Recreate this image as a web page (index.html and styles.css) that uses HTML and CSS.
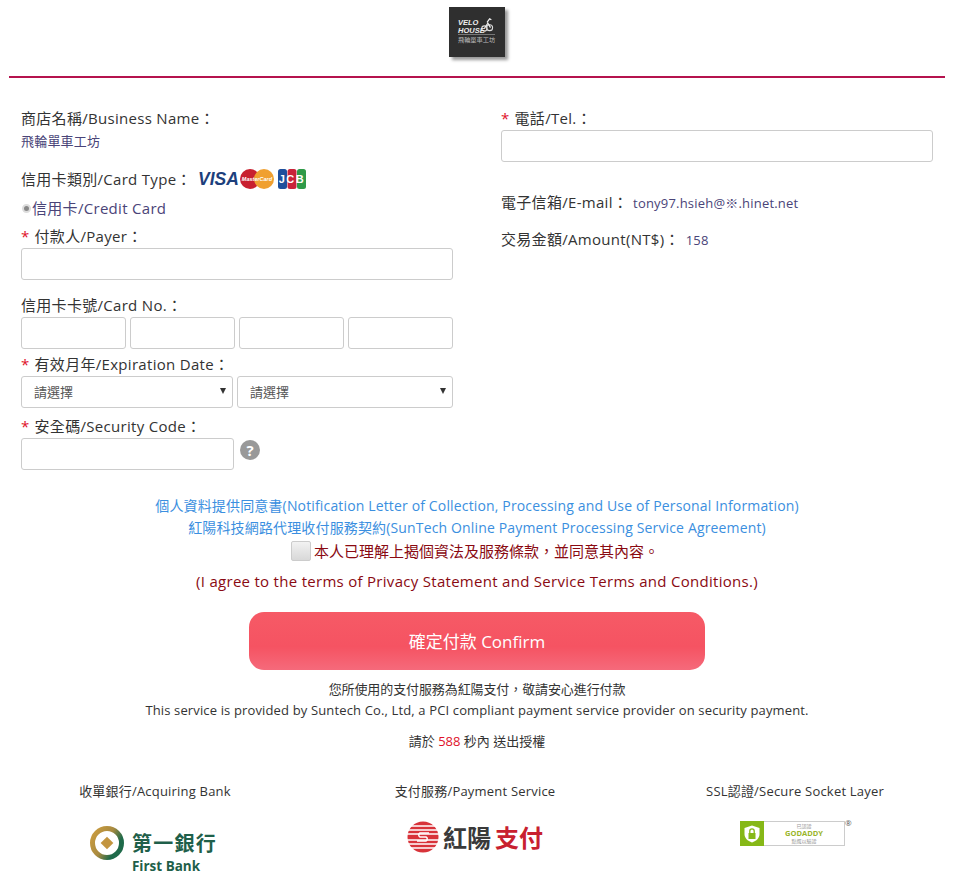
FILE: index.html
```html
<!DOCTYPE html>
<html lang="zh-Hant">
<head>
<meta charset="utf-8">
<title>飛輪單車工坊</title>
<link rel="stylesheet" href="styles.css">
</head>
<body>
<div class="page">
  <header class="top">
    <div class="logo">
      <svg class="logo-bike" viewBox="0 0 16 18" width="14" height="16"><circle cx="11" cy="12" r="3.4" fill="none" stroke="#ddd" stroke-width="1.2"/><circle cx="5" cy="13" r="3" fill="none" stroke="#ddd" stroke-width="1.2"/><path d="M5 13 9 7l3 5M8 6l3-4 2 1" fill="none" stroke="#eee" stroke-width="1.4"/></svg>
      <span class="logo-en">VELO<br>HOUSE</span>
      <span class="logo-zh">飛輪單車工坊</span>
    </div>
  </header>
  <main class="columns">
    <section class="col">
      <div class="label first">商店名稱/Business Name：</div>
      <div class="value store">飛輪單車工坊</div>
      <div class="label card-type">信用卡類別/Card Type：
        <svg class="cards" width="112" height="24" viewBox="0 0 112 24">
          <text x="1" y="18" class="visa">VISA</text>
          <circle cx="53" cy="12" r="10" fill="#c8202f"/>
          <circle cx="67" cy="12" r="10" fill="#f0a030"/>
          <text x="60" y="14" class="mc">MasterCard</text>
          <rect x="81" y="2" width="9" height="20" rx="2.5" fill="#1f4f9c"/>
          <rect x="90.5" y="2" width="9" height="20" rx="2.5" fill="#c9243a"/>
          <rect x="100" y="2" width="9" height="20" rx="2.5" fill="#2f9a48"/>
          <text x="95" y="16" class="jcb">JCB</text>
        </svg>
      </div>
      <div class="radio-row"><span class="radio"></span>信用卡/Credit Card</div>
      <div class="label payer"><span class="req">*</span>付款人/Payer：</div>
      <input class="field" type="text">
      <div class="label cardno">信用卡卡號/Card No.：</div>
      <div class="quad">
        <input class="field" type="text"><input class="field" type="text"><input class="field" type="text"><input class="field" type="text">
      </div>
      <div class="label expiry"><span class="req">*</span>有效月年/Expiration Date：</div>
      <div class="selects">
        <div class="select-wrap"><select class="field sel"><option>請選擇</option></select></div>
        <div class="select-wrap"><select class="field sel"><option>請選擇</option></select></div>
      </div>
      <div class="label security"><span class="req">*</span>安全碼/Security Code：</div>
      <div class="sec-row">
        <input class="field sec" type="text"><span class="help">?</span>
      </div>
    </section>
    <section class="col">
      <div class="label first"><span class="req">*</span>電話/Tel.：</div>
      <input class="field" type="text">
      <div class="label email">電子信箱/E-mail：<span class="value inline">tony97.hsieh@※.hinet.net</span></div>
      <div class="label amount">交易金額/Amount(NT$)：<span class="value inline wide">158</span></div>
    </section>
  </main>
  <section class="agree">
    <a class="link" href="#">個人資料提供同意書(Notification Letter of Collection, Processing and Use of Personal Information)</a>
    <a class="link" href="#">紅陽科技網路代理收付服務契約(SunTech Online Payment Processing Service Agreement)</a>
    <label class="check-row"><input class="check" type="checkbox">本人已理解上揭個資法及服務條款，並同意其內容。</label>
    <p class="agree-en">(I agree to the terms of Privacy Statement and Service Terms and Conditions.)</p>
    <button class="confirm" type="button">確定付款 Confirm</button>
    <p class="note n1">您所使用的支付服務為紅陽支付，敬請安心進行付款</p>
    <p class="note n2">This service is provided by Suntech Co., Ltd, a PCI compliant payment service provider on security payment.</p>
    <p class="note n3">請於 <span class="count">588</span> 秒內 送出授權</p>
  </section>
  <footer class="partners">
    <div class="partner">
      <div class="partner-title">收單銀行/Acquiring Bank</div>
      <div class="fb">
        <svg width="38" height="38" viewBox="0 0 38 38"><defs><linearGradient id="ring" x1="0" x2="1" y1="0.2" y2="0.8"><stop offset="0" stop-color="#c79a3f"/><stop offset=".45" stop-color="#a88a40"/><stop offset=".8" stop-color="#1f6a4a"/></linearGradient></defs><circle cx="19" cy="19" r="14.500" fill="#fff" stroke="url(#ring)" stroke-width="5"/><rect x="14.500" y="14.500" width="9" height="9" transform="rotate(45 19 19)" fill="#c3953f"/></svg>
        <div class="fb-text"><span class="fb-zh">第一銀行</span><span class="fb-en">First Bank</span></div>
      </div>
    </div>
    <div class="partner">
      <div class="partner-title">支付服務/Payment Service</div>
      <div class="st">
        <svg width="32" height="32" viewBox="0 0 32 32"><circle cx="16" cy="16" r="15.500" fill="#d8333a"/><path d="M0 5h32M0 9h32M0 13h32M0 19h32M0 23h32M0 27h32" stroke="#fff" stroke-width="1.300"/><path d="M22 12h-9a2.200 2.200 0 0 0 0 4h6a2.200 2.200 0 0 1 0 4h-9" fill="none" stroke="#fff" stroke-width="1.500"/></svg>
        <span class="st-dark">紅陽</span><span class="st-red">支付</span>
      </div>
    </div>
    <div class="partner">
      <div class="partner-title">SSL認證/Secure Socket Layer</div>
      <div class="gd">
        <div class="gd-badge">
          <div class="gd-icon"><svg width="16" height="18" viewBox="0 0 16 18"><path d="M8 .5 15.500 3v6c0 4-3 7-7.500 8.500C3.500 16 .5 13 .5 9V3z" fill="#fff"/><rect x="4.500" y="8" width="7" height="6" fill="#86b817"/><path d="M5.800 8V6a2.200 2.200 0 0 1 4.400 0v2" fill="none" stroke="#86b817" stroke-width="1.300"/></svg></div>
          <div class="gd-text"><span class="gd-s">已認證</span><span class="gd-m">GODADDY</span><span class="gd-s">點選以驗證</span></div>
        </div>
        <span class="gd-r">®</span>
      </div>
    </div>
  </footer>
</div>
</body>
</html>
```
FILE: styles.css
```css
* { box-sizing: border-box; }
html, body { margin: 0; padding: 0; background: #fff; }
body {
  font-family: "Open Sans", "Noto Sans CJK TC", sans-serif;
  color: #333;
  overflow: hidden;
}
.page { width: 936px; margin-left: 9px; }
.top {
  height: 78px;
  border-bottom: 2px solid #b5134e;
  padding-top: 7px;
  display: flex;
  justify-content: center;
}
.logo {
  width: 56px; height: 50px;
  background: #2f2f2f;
  box-shadow: 3px 3px 3px #999;
  color: #ddd;
  position: relative;
}
.logo-en {
  position: absolute; left: 9px; top: 12px;
  font: italic 900 7.500px/7.500px "Liberation Sans", sans-serif;
  color: #eee;
}
.logo-bike { position: absolute; left: 31px; top: 10px; }
.logo-zh {
  position: absolute; left: 9px; top: 27px;
  width: 37px;
  border-top: 1px solid #777;
  padding-top: 1px;
  font: 6.200px/8px "Noto Sans CJK TC", sans-serif;
  white-space: nowrap;
  color: #bbb;
}
.columns {
  display: grid;
  grid-template-columns: 432px 432px;
  column-gap: 48px;
  padding: 0 12px;
}
.col { display: block; min-width: 0; }
.label { font-size: 15px; line-height: 20px; color: #333; white-space: nowrap; letter-spacing: .3px; }
.first { margin-top: 30px; }
.req { color: #e0122a; margin-right: 5px; }
.value { color: #4a4478; font-size: 13px; line-height: 20px; letter-spacing: .2px; }
.inline { margin-left: 5px; }
.wide { margin-left: 6px; }
.store { margin-top: 3px; }
.card-type { margin-top: 18px; display: flex; align-items: center; height: 20px; }
.cards { margin-left: 5px; }
.visa { font: italic 900 17.500px "Liberation Sans", sans-serif; fill: #1d3f7c; letter-spacing: 0; }
.mc { font: italic 700 5.500px "Liberation Sans", sans-serif; fill: #fff; text-anchor: middle; letter-spacing: 0; }
.jcb { font: 700 11px "Liberation Sans", sans-serif; fill: #fff; text-anchor: middle; letter-spacing: 1.500px; }
.radio-row { margin-top: 9px; font-size: 15px; line-height: 20px; color: #4a4478; display: flex; align-items: center; letter-spacing: .3px; }
.radio {
  width: 9px; height: 9px; margin: 0 1px 0 1px;
  border-radius: 50%;
  background: #888;
  border: 2px solid #ddd;
}
.payer { margin-top: 8px; }
.field {
  display: block;
  width: 100%;
  height: 32px;
  border: 1px solid #ccc;
  border-radius: 3px;
  background: #fff;
  padding: 0 12px;
  margin-top: 2px;
}
.cardno { margin-top: 15px; }
.quad { display: grid; grid-template-columns: repeat(4, 105px); column-gap: 4px; }
.expiry { margin-top: 5px; }
.selects { display: grid; grid-template-columns: 212px 216px; column-gap: 4px; margin-top: 2px; }
.select-wrap { position: relative; }
.select-wrap::after {
  content: "";
  position: absolute;
  right: 7px; top: 12px;
  border-left: 3px solid transparent;
  border-right: 3px solid transparent;
  border-top: 6px solid #333;
}
.sel {
  appearance: none;
  margin: 0;
  font: 13px "Open Sans", "Noto Sans CJK TC", sans-serif;
  color: #555;
}
.security { margin-top: 8px; }
.sec-row { display: flex; align-items: flex-start; margin-top: 2px; }
.sec { width: 213px; margin: 0; }
.help {
  width: 20px; height: 20px; margin: 2px 0 0 6px;
  border-radius: 50%;
  background: #999;
  color: #fff;
  font: 700 15px/20px "Open Sans", sans-serif;
  text-align: center;
}
.email { margin-top: 30px; }
.amount { margin-top: 16px; }
.agree { display: flex; flex-direction: column; align-items: center; margin-top: 25px; }
.link { color: #3b8fe0; text-decoration: none; font-size: 14px; line-height: 22px; white-space: nowrap; letter-spacing: .15px; }
.check-row { display: flex; align-items: center; color: #8a0a12; font-size: 15px; line-height: 22px; margin-top: 1px; padding: 0 4px 2px 0; }
.check {
  appearance: none;
  width: 20px; height: 20px; margin: 0 3px 0 0;
  border: 1px solid #ccc;
  border-radius: 2px;
  background: linear-gradient(#f2f2f2, #d8d8d8);
}
.agree-en { color: #8a0a12; margin: 7px 0 0; font-size: 15px; line-height: 20px; white-space: nowrap; letter-spacing: .29px; }
.confirm {
  width: 456px; height: 58px;
  margin-top: 21px;
  padding: 0 0 2px;
  border: 0;
  border-radius: 15px;
  background: linear-gradient(#f65a66 0, #f55362 60%, #f56a7b 100%);
  color: #fff;
  font: 17px "Open Sans", "Noto Sans CJK TC", sans-serif;
}
.note { margin: 0; font-size: 13px; line-height: 20px; color: #333; white-space: nowrap; }
.n1 { margin-top: 9px; letter-spacing: -.1px; }
.n2 { margin-top: 1px; letter-spacing: .14px; }
.n3 { margin-top: 11px; }
.count { color: #e0122a; }
.partners { display: grid; grid-template-columns: repeat(3, 320px); margin: 30px 0 0 -14px; }
.partner { display: flex; flex-direction: column; align-items: center; }
.partner-title { font-size: 13px; line-height: 20px; color: #333; white-space: nowrap; letter-spacing: .2px; }
.fb { display: flex; align-items: flex-start; margin: 23px 5px 0 0; gap: 6px; }
.fb-text { display: flex; flex-direction: column; margin-top: 4px; }
.fb-zh { font: 700 20px/29px "Noto Sans CJK TC", sans-serif; color: #1f5f4a; letter-spacing: 1.300px; }
.fb-en { font: 700 13.500px/18px "Open Sans", sans-serif; color: #1f5f4a; }
.st { display: flex; align-items: center; margin-top: 20px; }
.st-dark, .st-red { font: 700 24px/32px "Noto Sans CJK TC", sans-serif; }
.st-dark { color: #3a3a3a; margin-left: 4px; }
.st-red { color: #c8202f; margin-left: 4px; }
.gd { position: relative; margin: 20px 5px 0 0; }
.gd-badge { display: flex; width: 105px; height: 25px; border: 1px solid #ccc; }
.gd-icon { width: 24px; background: #86b817; display: flex; align-items: center; justify-content: center; margin: -1px 0 -1px -1px; }
.gd-text { flex: 1; display: flex; flex-direction: column; align-items: center; justify-content: center; line-height: 7px; }
.gd-s { font-size: 5px; line-height: 6px; color: #999; }
.gd-m { font: 700 7.500px/9px "Open Sans", sans-serif; color: #9ab52a; }
.gd-r { position: absolute; left: 105px; top: -3px; font-size: 8px; line-height: 10px; color: #555; }
```
